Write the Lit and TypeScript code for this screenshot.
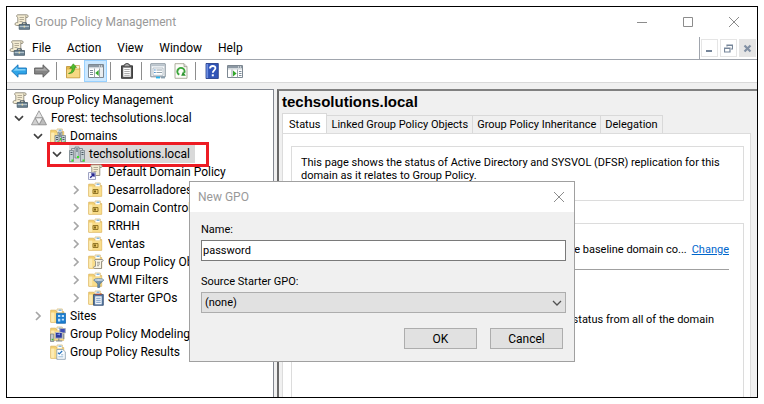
import { LitElement, html, css, svg, nothing, TemplateResult } from "lit";
import { customElement } from "lit/decorators.js";

const icon = (body: TemplateResult) =>
  html`<svg class="icon" width="16" height="16" viewBox="0 0 16 16" aria-hidden="true">${body}</svg>`;

const scroll = svg`
  <path d="M3.5 .8h9.3c1.6 0 1.9 2.4.4 2.7h-1.4v8H2.5c-2-.1-2-2.6-.2-2.9h1.5V3.5C2.4 3 2.2 1.3 3.5.8z" fill="#f4ecd2" stroke="#8f8a7b" stroke-width=".9"/>
  <path d="M5.5 3.5H10M5.5 5.5H10M5.5 7.5h3" stroke="#a39c88" stroke-width=".8"/>
  <path d="M11.8 3.4V1.6" stroke="#8f8a7b" stroke-width=".8"/>`;
const folder = svg`
  <path d="M.7 2.2h5l1 1.4h7v10.7H.7z" fill="#f3cf6f" stroke="#dcb45c" stroke-width=".8"/>
  <path d="M7 1h5.3v4H7z" fill="#fff" stroke="#d5b467" stroke-width=".7"/>
  <path d="M8.5 2.2h3" stroke="#4f9bd5"/>
  <path d="M1.2 4.6h12.2v9.2H1.2z" fill="#f9dd8b"/>
  <path d="M1.2 4.6h3v9.2h-3z" fill="#fcebb4"/>`;
const tower = (x: number, y: number, h: number) => svg`
  <path d=${`M${x} ${y}h4v${h}h-4z`} fill="#c3ced4" stroke="#6b7a83" stroke-width=".7"/>
  <path d=${`M${x + 1} ${y + 2}h2M${x + 1} ${y + 4}h2`} stroke="#4d5c65" stroke-width="1"/>
  <path d=${`M${x + 2} ${y + h - 2}h2v2h-2z`} fill="#3fe02a"/>`;

const icons: Record<string, TemplateResult> = {
  console: svg`${scroll}
    <path d="M5.2 10.5h10.3v4.8H5.2z" fill="#6f8797" stroke="#435563" stroke-width=".8"/>
    <path d="M8.3 10.3V8.8h4v1.5" fill="none" stroke="#435563"/>
    <path d="M5.6 12.5h9.5" stroke="#c2d0d8" stroke-width=".8"/>
    <path d="M9.6 11.7h1.5v1.8H9.6z" fill="#eadfae"/>`,
  forest: svg`
    <path d="M8 .8 11.8 7.8H4.2z" fill="#e3e3e3" stroke="#8e8e8e" stroke-width=".8"/>
    <path d="M4.2 7.8 8 14.8H.5z" fill="#d0d0d0" stroke="#8e8e8e" stroke-width=".8"/>
    <path d="M11.8 7.8 15.5 14.8H8z" fill="#bdbdbd" stroke="#858585" stroke-width=".8"/>
    <path d="M4.2 7.8h7.6L8 14.8z" fill="#f2f2f2" stroke="#8e8e8e" stroke-width=".8"/>`,
  domains: svg`${folder}${tower(8, 4, 8)}${tower(5, 7.5, 8)}${tower(11.5, 7.5, 8)}`,
  domain: svg`
    <path d="M2.5 4V2.5h11V4" fill="none" stroke="#7b8992" stroke-width=".9"/>
    ${tower(6, 1, 11)}${tower(.5, 4.5, 11)}${tower(11.5, 4.5, 11)}`,
  link: svg`${scroll}
    <path d="M.5 8.5h7v7h-7z" fill="#f5f6ff" stroke="#8a8fb5" stroke-width=".8"/>
    <path d="M2.2 13.8 5.8 10.2M3.2 10h2.8v2.8" fill="none" stroke="#27298f" stroke-width="1.4"/>`,
  ou: svg`${folder}
    <path d="M5 7.5h5v4H5z" fill="#ecca68" stroke="#94782a"/>
    <path d="M6 9.5h2" stroke="#7d6318" stroke-width="2"/>`,
  gpos: svg`${folder}
    <path d="M7 5.5h7.2c1.4.2 1.4 1.7.2 1.9h-.9v7.1H6.8c-1.6-.2-1.6-2 0-2.2h.7V7.3c-1-.3-1-1.3-.5-1.8z" fill="#f7f3e5" stroke="#84827a" stroke-width=".8"/>
    <path d="M9 8.3h3M9 10h3M9 11.7h2" stroke="#8b897f" stroke-width=".8"/>`,
  filter: svg`${folder}
    <path d="M5.8 8h9.8l-3.8 4v3.3l-2 .5V12z" fill="#6d90b0" stroke="#446785" stroke-width=".7"/>
    <ellipse cx="10.7" cy="8" rx="4.8" ry="1.5" fill="#c6d7e5" stroke="#61809a" stroke-width=".7"/>`,
  starter: svg`${folder}
    <path d="M5.5 4.5h9.8v10.8H5.5z" fill="#5577a0" stroke="#344c70" stroke-width=".8"/>
    <path d="M7.2 6.3h6.5v8H7.2z" fill="#f3f7fc"/>
    <path d="M8.2 8.3h4.5M8.2 10.3h4.5M8.2 12.3h4.5" stroke="#6b8fbd" stroke-width=".9"/>
    <path d="M7.5 4.2h6" stroke="#b54a3a" stroke-width="1.2"/>`,
  sites: svg`${folder}
    <path d="M6.5 5.3h9v10h-9z" fill="#1b7ed0" stroke="#1261a8" stroke-width=".7"/>
    <path d="M8 7h2.3v2H8zM11.8 7H14v2h-2.2zM8 10.8h2.3v2.8H8zM11.8 10.8H14v1.7h-2.2z" fill="#bfe1fb"/>`,
  modeling: svg`${folder}
    <path d="M.5 8h3.3v7.5H.5z" fill="#c3c9ce" stroke="#6e777e" stroke-width=".7"/>
    <path d="M1.7 12.8h1.5v1.6H1.7z" fill="#38c926"/>
    <path d="M9.8 2.5h5.5V7H9.8z" fill="#3e4db4" stroke="#a8adb7"/>
    <path d="M5.3 6.5h7v5.7h-7z" fill="#2a389f" stroke="#b7bcc6"/>
    <path d="M6.5 8.6 10 7.3v2z" fill="#8195ea"/>
    <path d="M8.8 12.5V15M6 15h6.2" stroke="#7e8790" stroke-width="1.2"/>
    <path d="M13.7 8v5" stroke="#8b949c" stroke-width="1.3"/>`,
  results: svg`${folder}
    <path d="M6.8 5.5h6l2.5 2.3v7.5H6.8z" fill="#fbfdff" stroke="#8198aa" stroke-width=".8"/>
    <path d="M8 8.8 9.3 10 12.2 7" fill="none" stroke="#2573bd" stroke-width="1.2"/>
    <path d="M8.3 12.8h5M11 10.8h2.3" stroke="#7ba3c5" stroke-width=".8"/>`,
  back: svg`<path d="M.6 8 7 1.8V5h8.4v6H7v3.2z" fill="#2fa4e7" stroke="#1873b8" stroke-width=".9" stroke-linejoin="round"/>
    <path d="M2.3 7.8 6.2 4v2h8.3v1.6z" fill="#7fd0f8"/>`,
  forward: svg`<path d="M15.4 8 9 1.8V5H.6v6H9v3.2z" fill="#848484" stroke="#5e5e5e" stroke-width=".9" stroke-linejoin="round"/>
    <path d="M13.7 7.8 9.8 4v2H1.5v1.6z" fill="#a9a9a9"/>`,
  up: svg`<path d="M1.5 3.5h4l1 1.5h8.3v9.8H1.5z" fill="#e5b94e" stroke="#b98f32" stroke-width=".8"/>
    <path d="M10 2.5h4.5V6H10z" fill="#fff3cc" stroke="#c9a04a" stroke-width=".7"/>
    <path d="M2 6.5h12.4v7.8H2z" fill="#f7d983"/>
    <path d="M3.5 10.5C6.5 9.7 7.2 7.5 7 4.8L4.8 5.4 8.3.8l3.2 3.6-2-.1c.4 3.7-1.7 6.5-6 6.2z" fill="#50bd2b" stroke="#2e8a18" stroke-width=".6"/>`,
  tree: svg`<path d="M.5 1.5h15v13H.5z" fill="#fff" stroke="#7d8892"/>
    <path d="M1 2h14v2.3H1z" fill="#8d99a4"/><path d="M1 4.8h14" stroke="#c9d0d6"/>
    <path d="M11 3h1M13 3h1" stroke="#fff"/><path d="M6.5 5.5v9M11.5 5.5v9" stroke="#9aa4ad"/>
    <path d="M2 7.5h3M2 9.5h3M2 11.5h3" stroke="#6e7f8f" stroke-width=".9"/>
    <path d="M10.7 7v6L7.3 10z" fill="#33a82b"/><path d="M12 6h3v8h-3z" fill="#e9edf0"/>`,
  clipboard: svg`<path d="M2.5 2.8h11v12.5h-11z" fill="#555" stroke="#3f3f3f"/>
    <path d="M4.2 4.5h7.6v9.3H4.2z" fill="#fdfdfd"/>
    <path d="M5.2 1.6h1.5V.5h2.6v1.1h1.5v2.2H5.2z" fill="#a7a7a7" stroke="#454545" stroke-width=".8"/>
    <path d="M5.3 6.5h5.4M5.3 8.5h5.4M5.3 10.5h5.4M5.3 12.4h5.4" stroke="#999" stroke-width=".8"/>`,
  properties: svg`<path d="M.8.8h14.4v13H.8z" fill="#f6f8fa" stroke="#7e8b96"/>
    <path d="M1.3 1.3h13.4v1.9H1.3z" fill="#b9c3cb"/>
    <path d="M3 5h10v7.3H3z" fill="#fff" stroke="#a4b0ba" stroke-width=".8"/>
    <path d="M4.2 7h1.4M4.2 9.5h1.4" stroke="#2b7bc4" stroke-width="1.2"/>
    <path d="M6.5 7H12M6.5 9.5H12" stroke="#8796a2" stroke-width=".9"/>
    <path d="M6 14.5h4" stroke="#27b3ec" stroke-width="1.8"/><path d="M11 14.5h4" stroke="#8ba0af" stroke-width="1.8"/>`,
  refresh: svg`<path d="M2 .7h9l3 3v11.6H2z" fill="#fdfdf8" stroke="#9a9a88" stroke-width=".8"/>
    <path d="M11 .7v3h3" fill="#ddd" stroke="#9a9a88" stroke-width=".8"/>
    <path d="M6.3 11.7A3.6 3.6 0 1 1 11.3 9.8" fill="none" stroke="#3aa63a" stroke-width="2"/>
    <path d="M12.8 12.8 8.2 12.7 10 8.6z" fill="#2e9430"/>`,
  help: svg`<path d="M2 .5h12.3v15H2z" fill="#3155b8" stroke="#1d3582" stroke-width=".8"/>
    <path d="M2.4 1h1.7v14H2.4z" fill="#6d8ee0"/>
    <path d="M6 5.5C6 2.2 11.6 2.2 11.4 5.3 11.3 7.3 8.8 7.5 8.8 9.8" fill="none" stroke="#fff" stroke-width="1.8"/>
    <path d="M7.8 11.3h2v2h-2z" fill="#fff"/>`,
  action: svg`<path d="M.5 2.5h15v12H.5z" fill="#fff" stroke="#7d8892"/>
    <path d="M1 3h14v2.3H1z" fill="#8d99a4"/><path d="M11 4h1M13 4h1" stroke="#fff"/>
    <path d="M1 6h14" stroke="#c9d0d6"/><path d="M10.5 6.5v8M5 6.5v8" stroke="#9aa4ad"/>
    <path d="M12 8.5h2.5M12 10.5h2.5M12 12.5h2.5" stroke="#6e7f8f" stroke-width=".9"/>
    <path d="M6 7.5v6l3.6-3z" fill="#33a82b"/>`,
};

interface TreeNode {
  label: string;
  icon: string;
  state?: "open" | "closed";
  selected?: boolean;
  children?: TreeNode[];
}

const closed = (label: string, name: string): TreeNode => ({ label, icon: name, state: "closed" });

const forest: TreeNode[] = [
  {
    label: "Forest: techsolutions.local", icon: "forest", state: "open",
    children: [
      {
        label: "Domains", icon: "domains", state: "open",
        children: [
          {
            label: "techsolutions.local", icon: "domain", state: "open", selected: true,
            children: [
              { label: "Default Domain Policy", icon: "link" },
              closed("Desarrolladores", "ou"),
              closed("Domain Controllers", "ou"),
              closed("RRHH", "ou"),
              closed("Ventas", "ou"),
              closed("Group Policy Objects", "gpos"),
              closed("WMI Filters", "filter"),
              closed("Starter GPOs", "starter"),
            ],
          },
        ],
      },
      closed("Sites", "sites"),
      { label: "Group Policy Modeling", icon: "modeling" },
      { label: "Group Policy Results", icon: "results" },
    ],
  },
];

@customElement("policy-tree")
class PolicyTree extends LitElement {
  static styles = css`
    :host { display: block; font: 12px/18px Roboto, sans-serif; color: #000; white-space: nowrap; }
    ul { list-style: none; margin: 0; padding: 0; }
    .nested { padding-left: 19px; }
    .row { position: relative; display: flex; align-items: center; height: 18px; }
    .toggle { width: 19px; height: 18px; padding: 0 0 0 2px; border: 0; background: none; display: flex; align-items: center; flex: none; box-sizing: border-box; }
    .item { display: flex; align-items: center; gap: 4px; height: 18px; padding-right: 5px; }
    .selected { background: #d9d9d9; }
    .marked::after { content: ""; position: absolute; left: -3px; top: -3px; width: 156px; height: 19px; border: 3px solid #ed1c24; }
    .icon { flex: none; }
  `;

  private node(n: TreeNode): TemplateResult {
    return html`<li>
      <div class="row ${n.selected ? "marked" : ""}">
        ${n.state
          ? html`<button class="toggle" aria-label=${n.label}>
              <svg width="10" height="10" viewBox="0 0 10 10" aria-hidden="true">
                ${n.state === "open"
                  ? svg`<path d="M1 3.2 5 7 9 3.2" fill="none" stroke="#404040" stroke-width="1.7"/>`
                  : svg`<path d="M3 1 7 5 3 9" fill="none" stroke="#a6a6a6" stroke-width="1.7"/>`}
              </svg>
            </button>`
          : html`<span class="toggle"></span>`}
        <span class="item ${n.selected ? "selected" : ""}">${icon(icons[n.icon])}<span>${n.label}</span></span>
      </div>
      ${n.children ? html`<ul class="nested">${n.children.map((c) => this.node(c))}</ul>` : nothing}
    </li>`;
  }

  render() {
    return html`
      <div class="row"><span class="item">${icon(icons.console)}<span>Group Policy Management</span></span></div>
      <ul>${forest.map((n) => this.node(n))}</ul>
    `;
  }
}

@customElement("new-gpo-dialog")
class NewGpoDialog extends LitElement {
  static styles = css`
    :host { display: block; box-sizing: border-box; border: 1px solid #a0a0a0; background: #f0f0f0; font: 11px/14px Roboto, sans-serif; color: #000; }
    .title { display: flex; align-items: center; justify-content: space-between; height: 30px; padding: 0 9px 0 8px; background: #fff; color: #999; font-size: 12px; }
    .close { border: 0; padding: 0; background: none; display: flex; }
    form { display: flex; flex-direction: column; padding: 11px 8px 12px 11px; }
    .field { display: grid; row-gap: 3px; margin-bottom: 14px; }
    input, select { font: inherit; color: inherit; box-sizing: border-box; width: 100%; height: 21px; margin: 0; border-radius: 0; outline: 0; }
    input { border: 1px solid #7a7a7a; background: #fff; padding: 0 1px; }
    select { appearance: none; border: 1px solid #adadad; background: #e1e1e1; padding: 0 3px; }
    .drop { position: relative; display: grid; }
    .drop svg { position: absolute; right: 4px; top: 6px; pointer-events: none; }
    .actions { display: flex; justify-content: flex-end; gap: 13px; padding: 1px 3px 0 0; }
    .actions button { width: 73px; height: 21px; padding: 0; font: inherit; font-size: 12px; color: inherit; border: 1px solid #adadad; background: #e1e1e1; }
  `;
  render() {
    return html`
      <div class="title">
        <span>New GPO</span>
        <button class="close" aria-label="Close"><svg width="12" height="12" viewBox="0 0 12 12"><path d="M1 1 11 11M11 1 1 11" stroke="#8c8c8c" fill="none"/></svg></button>
      </div>
      <form @submit=${(e: Event) => e.preventDefault()}>
        <div class="field"><label for="name">Name:</label><input id="name" value="password" /></div>
        <div class="field"><label for="source">Source Starter GPO:</label>
          <div class="drop">
            <select id="source"><option>(none)</option></select>
            <svg width="10" height="10" viewBox="0 0 10 10" aria-hidden="true"><path d="M1 3 5 7 9 3" fill="none" stroke="#505050" stroke-width="1.3"/></svg>
          </div>
        </div>
        <div class="actions"><button>OK</button><button type="button">Cancel</button></div>
      </form>
    `;
  }
}

@customElement("app-root")
class AppRoot extends LitElement {
  static styles = css`
    :host { display: flex; box-sizing: border-box; min-height: 100vh; padding: 6px; background: #fff; font: 12px/16px Roboto, sans-serif; color: #000; }
    .window { position: relative; flex: 1; display: flex; flex-direction: column; border: 1px solid #000; min-width: 0; }
    button { border: 0; padding: 0; margin: 0; background: none; font: inherit; color: inherit; }
    .titlebar { display: flex; align-items: center; height: 30px; padding-left: 7px; color: #999; }
    .titlebar .icon { margin-right: 5px; }
    .spacer { flex: 1; }
    .caption { width: 46px; height: 30px; display: flex; align-items: center; justify-content: center; }
    .menubar { display: flex; align-items: center; height: 22px; padding-left: 2px; border-bottom: 1px solid #a0a5ad; }
    .menus { display: flex; gap: 16px; padding-left: 7px; }
    .mdi { display: flex; gap: 2px; align-items: center; height: 22px; padding: 0 1px; border-left: 1px solid #a0a5ad; }
    .mdi button { width: 17px; height: 18px; box-sizing: border-box; display: flex; align-items: center; justify-content: center; border: 1px solid #e5e5e5; }
    .mdi .dim { background: #e5e5e5; }
    .toolbar { display: flex; align-items: center; height: 22px; border-bottom: 1px solid #d9d9d9; }
    .tool { width: 23px; height: 22px; box-sizing: border-box; display: flex; align-items: center; justify-content: center; }
    .active { background: #cce8ff; border: 1px solid #99d1ff; }
    .sep { width: 5px; margin-left: 3px; height: 18px; box-sizing: border-box; border-left: 1px solid #8d8d8d; }
    .body { flex: 1; display: grid; grid-template-columns: 267px minmax(0, 1fr); column-gap: 3px; padding-top: 6px; background: #f0f0f0; }
    .side { background: #fff; border: solid #828790; border-width: 1px 1px 0 0; padding: 1px 0 0 5px; overflow: hidden; }
    .pane { display: flex; flex-direction: column; border: solid #696969; border-width: 2px 0 0 2px; border-top-color: #808080; padding: 0 6px 0 3px; font-size: 11px; line-height: 13px; }
    h1 { font: bold 15px/22px "Liberation Sans", Arial, sans-serif; margin: 0; }
    .tabs { display: flex; align-items: flex-end; height: 20px; }
    .tab { box-sizing: border-box; height: 18px; border: 1px solid #d9d9d9; border-left: 0; border-bottom: 0; padding: 0 4px; }
    .current { height: 21px; margin-bottom: -1px; background: #fff; border-left: 1px solid #d9d9d9; padding: 0 6px; }
    .page { flex: 1; display: flex; flex-direction: column; gap: 22px; background: #fff; border: 1px solid #dcdcdc; border-bottom: 0; padding: 12px 6px 0 8px; }
    .box { border: 1px solid #dcdcdc; box-sizing: border-box; }
    .intro { height: 55px; padding: 9px; }
    p { margin: 0; }
    .status { flex: 1; border-bottom: 0; padding: 19px 14px 0 9px; }
    .baseline { display: flex; justify-content: flex-end; gap: 5px; padding-bottom: 13px; border-bottom: 1px solid #a0a0a0; }
    a { color: #0066cc; }
    .note { text-align: right; padding: 43px 15px 0 0; }
    .dialog { position: absolute; left: 182px; top: 174px; width: 386px; }
  `;

  private tool(name: string, label: string, active = false) {
    return html`<button class="tool ${active ? "active" : ""}" aria-label=${label}>${icon(icons[name])}</button>`;
  }

  render() {
    const sep = html`<span class="sep"></span>`;
    return html`
      <div class="window">
        <header class="titlebar">
          ${icon(icons.console)}<span>Group Policy Management</span><span class="spacer"></span>
          <button class="caption" aria-label="Minimize"><svg width="12" height="12"><path d="M1 6.5h10" stroke="#8c8c8c"/></svg></button>
          <button class="caption" aria-label="Maximize"><svg width="12" height="12"><path d="M1.5 1.5h9v9h-9z" fill="none" stroke="#8c8c8c"/></svg></button>
          <button class="caption" aria-label="Close"><svg width="12" height="12"><path d="M1 1 11 11M11 1 1 11" stroke="#8c8c8c"/></svg></button>
        </header>
        <nav class="menubar">
          ${icon(icons.console)}
          <div class="menus">${["File", "Action", "View", "Window", "Help"].map((m) => html`<button>${m}</button>`)}</div>
          <span class="spacer"></span>
          <div class="mdi">
            <button aria-label="Minimize child"><svg width="9" height="9"><path d="M1 7h6" stroke="#76869a" stroke-width="2"/></svg></button>
            <button aria-label="Restore child"><svg width="9" height="9"><path d="M3 2.5V1h5.5v4H7M3 1.5h5.5M.5 4h5.5v4H.5zM.5 4.5H6" fill="none" stroke="#76869a" stroke-width="1.2"/></svg></button>
            <button class="dim" aria-label="Close child"><svg width="9" height="9"><path d="M1.5 1.5 7.5 7.5M7.5 1.5 1.5 7.5" stroke="#8190a4" stroke-width="2.2"/></svg></button>
          </div>
        </nav>
        <div class="toolbar">
          ${this.tool("back", "Back")}${this.tool("forward", "Forward")}${sep}
          ${this.tool("up", "Up one level")}${this.tool("tree", "Show console tree", true)}${sep}
          ${this.tool("clipboard", "Paste")}${sep}
          ${this.tool("properties", "Properties")}${this.tool("refresh", "Refresh")}${sep}
          ${this.tool("help", "Help")}${this.tool("action", "Show action pane")}
        </div>
        <main class="body">
          <section class="side"><policy-tree></policy-tree></section>
          <section class="pane">
            <h1>techsolutions.local</h1>
            <div class="tabs">
              <button class="tab current">Status</button>
              <button class="tab">Linked Group Policy Objects</button>
              <button class="tab">Group Policy Inheritance</button>
              <button class="tab">Delegation</button>
            </div>
            <div class="page">
              <div class="box intro">
                <p>This page shows the status of Active Directory and SYSVOL (DFSR) replication for this<br />domain as it relates to Group Policy.</p>
              </div>
              <div class="box status">
                <div class="baseline"><span>the baseline domain co...</span><a href="#">Change</a></div>
                <p class="note">the status from all of the domain</p>
              </div>
            </div>
          </section>
        </main>
        <new-gpo-dialog class="dialog"></new-gpo-dialog>
      </div>
    `;
  }
}
